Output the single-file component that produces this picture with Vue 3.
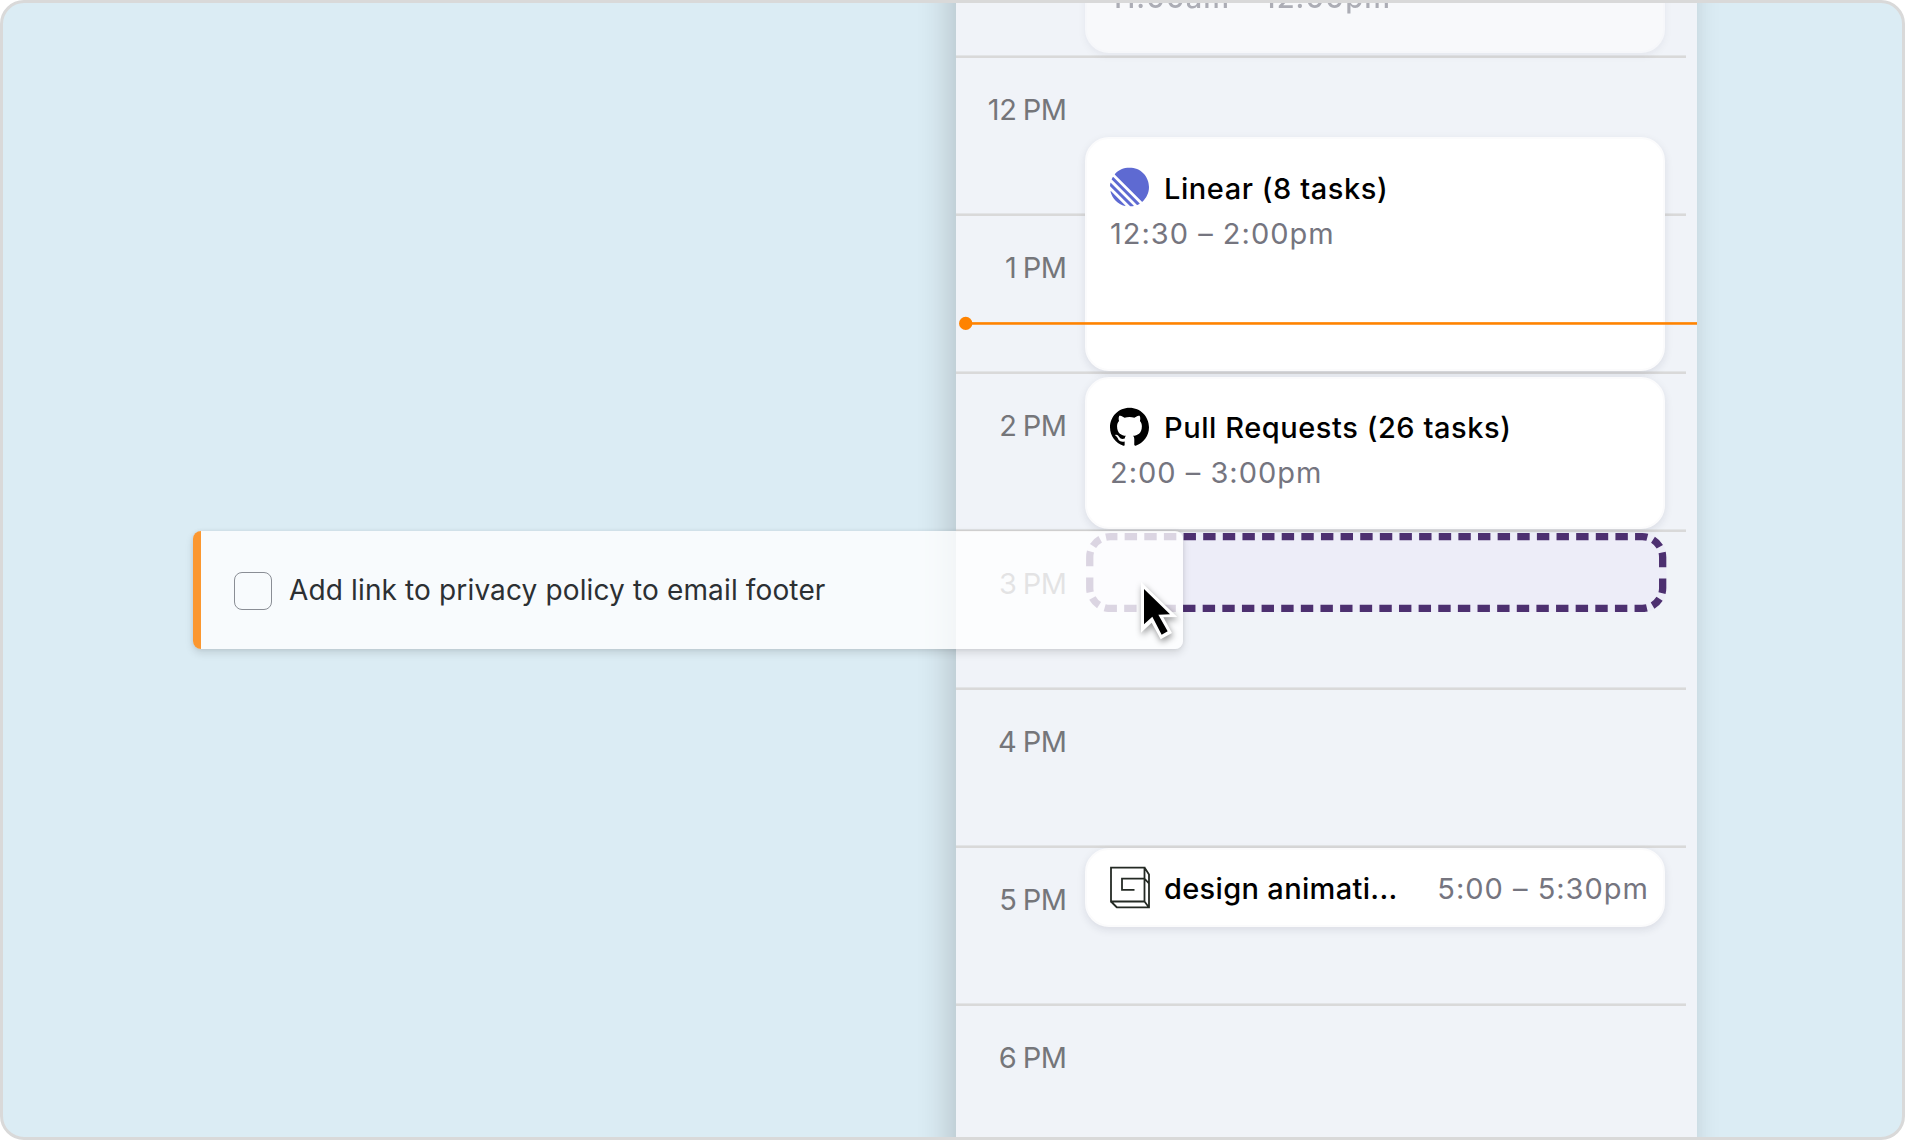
<script setup>
const hours = ['12 PM', '1 PM', '2 PM', '3 PM', '4 PM', '5 PM', '6 PM']

const events = [
  { id: 'past', time: '11:00am – 12:00pm', top: -100, height: 150, past: true },
  { id: 'linear', icon: 'linear', title: 'Linear (8 tasks)', time: '12:30 – 2:00pm', top: 134, height: 234 },
  { id: 'github', icon: 'github', title: 'Pull Requests (26 tasks)', time: '2:00 – 3:00pm', top: 374, height: 152 },
  { id: 'design', icon: 'cube', title: 'design animati...', time: '5:00 – 5:30pm', top: 845, height: 79, compact: true },
]

// Dash pattern for one half of the drop zone outline: a long side, a corner, a short side, a corner.
const dashes = [
  ...Array(27).fill([12.4, 7.233]).flat(),
  12.4, 6.1, 9.7, 6.1, 14.8, 11.3, 14.8, 6.1, 9.7, 6.1,
].join(' ')
</script>

<template>
  <main class="frame">
    <section class="calendar">
      <div class="hours">
        <div v-for="hour in hours" :key="hour" class="hour">
          <span class="hour-label">{{ hour }}</span>
        </div>
      </div>

      <article
        v-for="event in events"
        :key="event.id"
        class="event"
        :class="[event.id, { compact: event.compact }]"
        :style="{ top: event.top + 'px', height: event.height + 'px' }"
      >
        <div v-if="event.title" class="event-head">
          <svg v-if="event.icon === 'linear'" class="icon" viewBox="0 0 100 100" fill="#5e6ad2">
            <path d="M1.22541 61.5228c-.2225-.9485.90748-1.5459 1.59638-.857L39.3342 97.1782c.6889.6889.0915 1.8189-.857 1.5964C20.0515 94.4522 5.54779 79.9485 1.22541 61.5228ZM.00189135 46.8891c-.01764375.2833.08887215.5599.28957165.7606L52.3503 99.7085c.2007.2007.4773.3075.7606.2896 2.3692-.1476 4.6938-.46 6.9624-.9259.7645-.157 1.0301-1.0963.4782-1.6481L2.57595 39.4485c-.55186-.5519-1.49117-.2863-1.648174.4782-.465915 2.2686-.77832 4.5932-.92588465 6.9624ZM4.21093 29.7054c-.16649.3738-.08169.8106.20765 1.1l64.77602 64.776c.2894.2894.7262.3742 1.1.2077 1.7861-.7956 3.5171-1.6927 5.1855-2.684.5521-.328.6373-1.0867.1832-1.5407L8.43566 24.3367c-.45409-.4541-1.21271-.3689-1.54074.1832-.99132 1.6684-1.88843 3.3994-2.68399 5.1855ZM12.6587 18.074c-.3701-.3701-.393-.9637-.0443-1.3541C21.7795 6.45931 35.1114 0 49.9519 0 77.5927 0 100 22.4073 100 50.0481c0 14.8405-6.4593 28.1724-16.7199 37.3375-.3903.3487-.984.3258-1.3542-.0443L12.6587 18.074Z" />
          </svg>
          <svg v-else-if="event.icon === 'github'" class="icon" viewBox="0 0 24 24">
            <path d="M12 .297c-6.63 0-12 5.373-12 12 0 5.303 3.438 9.8 8.205 11.385.6.113.82-.258.82-.577 0-.285-.01-1.04-.015-2.04-3.338.724-4.042-1.61-4.042-1.61C4.422 18.07 3.633 17.7 3.633 17.7c-1.087-.744.084-.729.084-.729 1.205.084 1.838 1.236 1.838 1.236 1.07 1.835 2.809 1.305 3.495.998.108-.776.417-1.305.76-1.605-2.665-.3-5.466-1.332-5.466-5.93 0-1.31.465-2.38 1.235-3.22-.135-.303-.54-1.523.105-3.176 0 0 1.005-.322 3.3 1.23.96-.267 1.98-.399 3-.405 1.02.006 2.04.138 3 .405 2.28-1.552 3.285-1.23 3.285-1.23.645 1.653.24 2.873.12 3.176.765.84 1.23 1.91 1.23 3.22 0 4.61-2.805 5.625-5.475 5.92.42.36.81 1.096.81 2.22 0 1.606-.015 2.896-.015 3.286 0 .315.21.69.825.57C20.565 22.092 24 17.592 24 12.297c0-6.627-5.373-12-12-12" />
          </svg>
          <svg v-else class="icon cube" viewBox="0 0 40 42" fill="none" stroke="#242a24" stroke-width="1.8">
            <path d="M1 1H34.5V35H1ZM34.5 1L39 8V41H7L1 35M34.5 35L39 41M34.5 12.2H12V23.3H24.5M34.5 12.2L39 17" />
          </svg>
          <h3 class="event-title">{{ event.title }}</h3>
        </div>
        <p class="event-time">{{ event.time }}</p>
      </article>

      <svg class="dropzone" viewBox="0 0 581 79.4">
        <rect x="0" y="0" width="580.6" height="79.2" rx="24" fill="#ededf8" />
        <path
          d="M24.2 3.65H556.2A20.5 20.5 0 0 1 576.7 24.15V54.95A20.5 20.5 0 0 1 556.2 75.45H24.2A20.5 20.5 0 0 1 3.7 54.95V24.15A20.5 20.5 0 0 1 24.2 3.65Z"
          fill="none"
          stroke="#4d3070"
          stroke-width="7.3"
          :stroke-dasharray="dashes"
          stroke-dashoffset="5.2"
        />
      </svg>

      <svg class="now" viewBox="0 0 741 15" fill="#ff8300">
        <rect x="10" y="6.15" width="731" height="2.6" />
        <circle cx="9.7" cy="7.4" r="6.65" />
      </svg>
    </section>

    <article class="task">
      <span class="checkbox"></span>
      <span class="task-name">Add link to privacy policy to email footer</span>
    </article>

    <svg class="cursor" viewBox="0 0 132 195">
      <path fill="#fff" d="M3 0V152L35 122L62 172L96 153L70 106L112 105Z" />
      <path fill="#000" d="M12 21V127L37 104L65 158L83 148L55 98L90 97Z" />
    </svg>
  </main>
</template>

<style>
body {
  margin: 0;
  background: #fff;
}
</style>

<style scoped>
.frame {
  position: relative;
  isolation: isolate;
  box-sizing: border-box;
  width: 1905px;
  height: 1140px;
  padding-left: 953px;
  overflow: hidden;
  border: 3px solid #d9d9d9;
  border-radius: 24px;
  background: #dbecf4;
  font-family: Inter, "Liberation Sans", sans-serif;
}

.calendar {
  position: relative;
  width: 741px;
  height: 1134px;
  background: #f0f3f8;
}

/* Taller than the column so the side shadow keeps its strength at both ends. */
.calendar::before {
  content: "";
  position: absolute;
  z-index: -1;
  inset: -60px 0;
  box-shadow: -8px 0 30px rgba(0, 0, 0, 0.165), 3px 0 14px rgba(0, 0, 0, 0.02);
}

.hours {
  display: flex;
  flex-direction: column;
  padding-top: 52px;
  width: 730px;
}

.hour {
  box-sizing: border-box;
  flex: none;
  height: 158px;
  padding-top: 34.5px;
  background: linear-gradient(#e2e4e6 0 1px, #d9d9d9 1px 3px, transparent 3px);
}

.hour:last-child {
  height: 128px;
}

.hour-label {
  display: block;
  width: 110.5px;
  color: #75767a;
  font-size: 29px;
  font-weight: 440;
  letter-spacing: -0.5px;
  line-height: 40px;
  text-align: right;
  word-spacing: -1.2px;
}

.event {
  position: absolute;
  left: 129px;
  box-sizing: border-box;
  width: 580px;
  padding: 30px 14px 0 23px;
  border: 2px solid #fbfbfc;
  border-radius: 24px;
  background: #fff;
  box-shadow: 0 3px 8px rgba(30, 30, 60, 0.1);
}

.event.past {
  padding-top: 68px;
  opacity: 0.55;
}

.event.github {
  padding-top: 29px;
}

.event.compact {
  display: flex;
  align-items: center;
  justify-content: space-between;
  padding-top: 2px;
  padding-bottom: 0;
}

.event-head {
  display: flex;
  align-items: center;
}

.icon {
  flex: none;
  width: 39px;
  height: 39px;
  margin-right: 15px;
  transform: translateY(-2.4px);
}

.github .icon {
  transform: translateY(-1.8px);
}

.icon.cube {
  width: 40px;
  height: 42px;
  margin-right: 14px;
  transform: translateY(-1.5px);
}

.event-title {
  margin: 0;
  color: #000;
  font-size: 29px;
  font-weight: 500;
  letter-spacing: 0.56px;
  line-height: 40px;
  white-space: nowrap;
}

.compact .event-title {
  letter-spacing: 0.33px;
}

.event-time {
  margin: 5px 0 0;
  color: #75757f;
  font-size: 29px;
  font-weight: 440;
  letter-spacing: 1px;
  line-height: 40px;
  white-space: nowrap;
}

.past .event-time {
  font-weight: 480;
  letter-spacing: 1.1px;
}

.compact .event-time {
  margin: 0;
}

.dropzone {
  position: absolute;
  top: 529.8px;
  left: 129.6px;
  width: 581px;
  height: 79.4px;
}

.now {
  position: absolute;
  top: 313px;
  left: 0;
  width: 741px;
  height: 15px;
}

.task {
  position: absolute;
  top: 528px;
  left: 190px;
  display: flex;
  align-items: center;
  gap: 17px;
  box-sizing: border-box;
  width: 990px;
  height: 118px;
  padding-left: 33px;
  border-left: 8px solid #fb9730;
  border-radius: 8px;
  background: rgba(255, 255, 255, 0.8);
  box-shadow: 0 4px 8px rgba(0, 0, 0, 0.12), 0 0 4px rgba(0, 0, 0, 0.07);
}

.checkbox {
  box-sizing: border-box;
  width: 38px;
  height: 38px;
  margin-top: 2px;
  border: 1px solid #8a8e95;
  border-radius: 8px;
}

.task-name {
  color: #2c3033;
  font-size: 28px;
  letter-spacing: 0.14px;
  line-height: 40px;
}

.cursor {
  position: absolute;
  top: 578.5px;
  left: 1137px;
  width: 44px;
  height: 65px;
  filter: drop-shadow(1px 3px 3px rgba(0, 0, 0, 0.4));
}
</style>
